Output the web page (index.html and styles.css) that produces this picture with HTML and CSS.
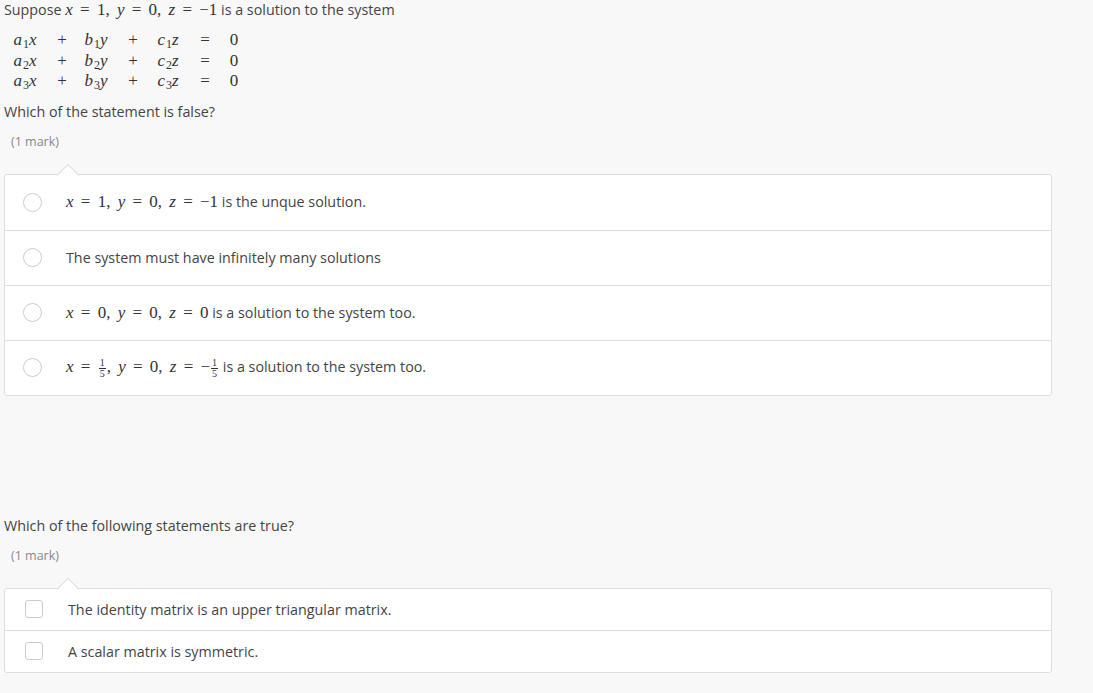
FILE: index.html
```html
<!DOCTYPE html>
<html lang="en">
<head>
    <meta charset="UTF-8">
    <title>Quiz</title>
    <link rel="stylesheet" href="styles.css">
</head>
<body>

    <div class="question">
        <p class="qtext">Suppose <span class="m"><i>x</i> = 1, <i>y</i> = 0, <i>z</i> = −1</span> is a solution to the system</p>
        <div class="eqs m">
            <span><i>a</i><sub>1</sub><i>x</i></span><span>+</span><span><i>b</i><sub>1</sub><i>y</i></span><span>+</span><span><i>c</i><sub>1</sub><i>z</i></span><span>=</span><span>0</span>
            <span><i>a</i><sub>2</sub><i>x</i></span><span>+</span><span><i>b</i><sub>2</sub><i>y</i></span><span>+</span><span><i>c</i><sub>2</sub><i>z</i></span><span>=</span><span>0</span>
            <span><i>a</i><sub>3</sub><i>x</i></span><span>+</span><span><i>b</i><sub>3</sub><i>y</i></span><span>+</span><span><i>c</i><sub>3</sub><i>z</i></span><span>=</span><span>0</span>
        </div>
        <p class="qtext spaced">Which of the statement is false?</p>
        <p class="mark">(1 mark)</p>

        <div class="answers radio-list">
            <div class="answer">
                <span class="radio"></span>
                <span><span class="m"><i>x</i> = 1, <i>y</i> = 0, <i>z</i> = −1</span> is the unque solution.</span>
            </div>
            <div class="answer">
                <span class="radio"></span>
                <span>The system must have infinitely many solutions</span>
            </div>
            <div class="answer">
                <span class="radio"></span>
                <span><span class="m"><i>x</i> = 0, <i>y</i> = 0, <i>z</i> = 0</span> is a solution to the system too.</span>
            </div>
            <div class="answer">
                <span class="radio"></span>
                <span><span class="m"><i>x</i> = <span class="frac"><span>1</span><span>5</span></span>, <i>y</i> = 0, <i>z</i> = −<span class="frac"><span>1</span><span>5</span></span></span> is a solution to the system too.</span>
            </div>
        </div>
    </div>

    <div class="question second">
        <p class="qtext">Which of the following statements are true?</p>
        <p class="mark">(1 mark)</p>

        <div class="answers check-list">
            <div class="answer">
                <span class="check"></span>
                <span>The identity matrix is an upper triangular matrix.</span>
            </div>
            <div class="answer">
                <span class="check"></span>
                <span>A scalar matrix is symmetric.</span>
            </div>
        </div>
    </div>

</body>
</html>
```

FILE: styles.css
```css
body {
    font-family: "Open Sans", Arial, sans-serif;
    font-size: 14.3px;
    color: #444;
    background-color: #f8f8f8;
    margin: 0;
    padding: 0 4px;
}

p {
    margin: 0;
}

.qtext {
    line-height: 20px;
}

.qtext.spaced {
    margin-top: 10px;
}

/* math text */
.m {
    font-family: "Liberation Serif", "DejaVu Serif", serif;
    font-size: 17px;
    word-spacing: 3px;
    color: #333;
}

.m i {
    font-style: italic;
}

.m sub {
    font-size: 12px;
    vertical-align: -3px;
    line-height: 0;
    margin-left: 1px;
}

.eqs {
    display: grid;
    grid-template-columns: 36px 38px 30px 44px 26px 48px 10px;
    grid-auto-rows: 20.5px;
    justify-items: center;
    align-items: center;
    margin: 10px 0 0 3px;
    word-spacing: 0;
}

.frac {
    display: inline-flex;
    flex-direction: column;
    align-items: center;
    vertical-align: middle;
    font-size: 10px;
    line-height: 9px;
    margin: 0 1px;
    word-spacing: 0;
}

.frac span:first-child {
    border-bottom: 1px solid #333;
    padding: 0 1px 1px;
}

.mark {
    margin-top: 10px;
    padding-left: 7px;
    line-height: 20px;
    font-size: 12.5px;
    color: #888;
}

/* answer box */
.answers {
    position: relative;
    width: 1046px;
    margin-top: 22px;
    background-color: #fff;
    border: 1px solid #ddd;
    border-radius: 3px;
}

.answers::before {
    content: "";
    position: absolute;
    top: -8px;
    left: 55px;
    width: 15px;
    height: 15px;
    background-color: #fff;
    border-top: 1px solid #ddd;
    border-left: 1px solid #ddd;
    transform: rotate(45deg);
}

.answer {
    display: flex;
    align-items: center;
    border-top: 1px solid #ddd;
}

.answer:first-child {
    border-top: none;
}

.radio-list .answer {
    height: 54px;
    padding-left: 18px;
    gap: 24px;
}

.radio-list .answer:first-child {
    height: 55px;
}

.check-list .answer {
    height: 41px;
    padding-left: 20px;
    gap: 25px;
}

.radio {
    position: relative;
    z-index: 1;
    width: 17px;
    height: 17px;
    border: 1px solid #ccc;
    border-radius: 50%;
    background-color: #fff;
    flex-shrink: 0;
}

.check {
    position: relative;
    z-index: 1;
    width: 16px;
    height: 16px;
    border: 1px solid #ccc;
    border-radius: 3px;
    background-color: #fff;
    flex-shrink: 0;
}

.second {
    margin-top: 120px;
}
```
